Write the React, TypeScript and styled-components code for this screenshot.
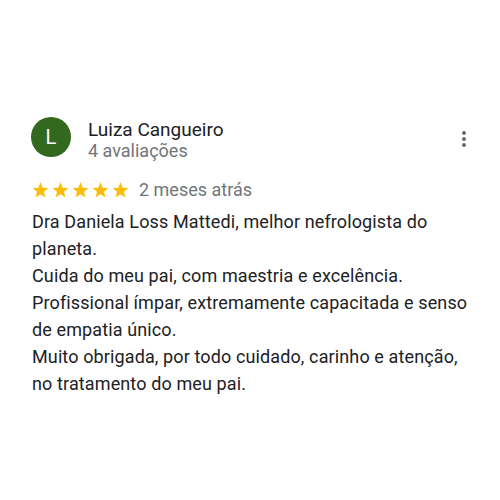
import React from "react";
import styled, { createGlobalStyle } from "styled-components";

const Global = createGlobalStyle`
  html, body { margin: 0; padding: 0; background: #ffffff; }
  body { font-family: Roboto, "Noto Sans", Arial, sans-serif; }
`;

const Page = styled.div`
  width: 500px;
  height: 500px;
  box-sizing: border-box;
  padding: 117px 24px 0 31px;
  background: #ffffff;
`;

const Header = styled.div`
  display: flex;
  align-items: flex-start;
  gap: 17px;
`;

const Avatar = styled.div`
  width: 40px;
  height: 40px;
  border-radius: 50%;
  background: #33691e;
  color: #ffffff;
  display: flex;
  align-items: center;
  justify-content: center;
  font-size: 20px;
  font-weight: 400;
  flex: none;
`;

const Info = styled.div`
  display: flex;
  flex-direction: column;
  flex: 1;
  padding-top: 2px;
`;

const Name = styled.div`
  font-size: 19px;
  line-height: 22px;
  color: #202124;
`;

const Count = styled.div`
  font-size: 18px;
  line-height: 20px;
  color: #70757a;
`;

const MenuButton = styled.div`
  width: 24px;
  height: 24px;
  margin-top: 10px;
  flex: none;
`;

const RatingRow = styled.div`
  display: flex;
  align-items: center;
  gap: 10px;
  margin-top: 18px;
  padding-left: 1px;
`;

const Stars = styled.div`
  display: flex;
  gap: 3px;
`;

const Date = styled.span`
  font-size: 18px;
  line-height: 22px;
  color: #70757a;
`;

const Body = styled.div`
  margin-top: 7px;
  padding-left: 1px;
  font-size: 18px;
  letter-spacing: 0.12px;
  line-height: 27px;
  color: #202124;
  width: 438px;
`;

const Star = () => (
  <svg width="17" height="16" viewBox="0 0 24 23" aria-hidden>
    <path
      fill="#fbbc04"
      d="M12 0.5l3.1 7.6 8.2 0.6-6.3 5.3 2 8-7-4.4-7 4.4 2-8L0.7 8.7l8.2-0.6z"
    />
  </svg>
);

export default function App() {
  return (
    <>
      <Global />
      <Page>
        <Header>
          <Avatar>L</Avatar>
          <Info>
            <Name>Luiza Cangueiro</Name>
            <Count>4 avaliações</Count>
          </Info>
          <MenuButton>
            <svg width="24" height="24" viewBox="0 0 24 24" aria-hidden>
              <circle cx="12" cy="6" r="1.9" fill="#5f6368" />
              <circle cx="12" cy="12" r="1.9" fill="#5f6368" />
              <circle cx="12" cy="18" r="1.9" fill="#5f6368" />
            </svg>
          </MenuButton>
        </Header>
        <RatingRow>
          <Stars>
            <Star />
            <Star />
            <Star />
            <Star />
            <Star />
          </Stars>
          <Date>2 meses atrás</Date>
        </RatingRow>
        <Body>
          Dra Daniela Loss Mattedi, melhor nefrologista do planeta.
          <br />
          Cuida do meu pai, com maestria e excelência.
          <br />
          Profissional ímpar, extremamente capacitada e senso de empatia único.
          <br />
          Muito obrigada, por todo cuidado, carinho e atenção, no tratamento do meu pai.
        </Body>
      </Page>
    </>
  );
}
